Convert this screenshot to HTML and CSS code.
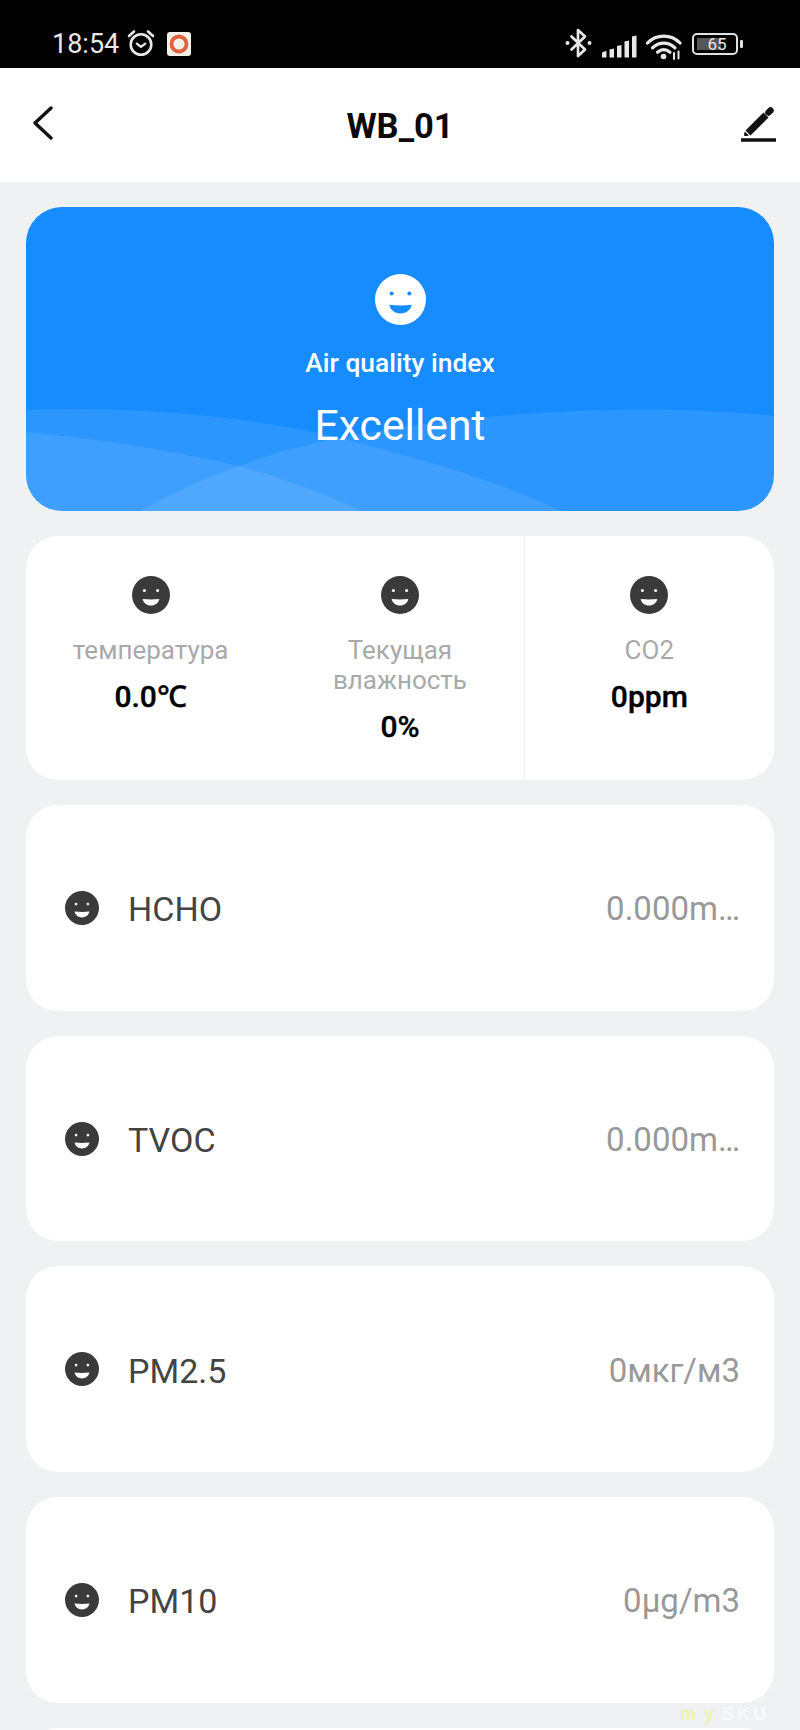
FILE: index.html
```html
<!DOCTYPE html>
<html lang="ru">
<head>
<meta charset="utf-8">
<title>WB_01</title>
<link rel="stylesheet" href="styles.css">
</head>
<body>
<svg class="defs" width="0" height="0" aria-hidden="true">
  <symbol id="face" viewBox="0 0 38 38">
    <circle cx="19" cy="19" r="19" fill="currentColor"/>
    <circle cx="12.400" cy="14.600" r="1.500" fill="var(--face-detail)"/>
    <circle cx="25.600" cy="14.600" r="1.500" fill="var(--face-detail)"/>
    <path d="M10.700 23q8.300 .9 16.600 0c-.7 4-4.100 6.500-8.300 6.500s-7.600-2.500-8.300-6.500z" fill="var(--face-detail)"/>
  </symbol>
</svg>
<div class="status">
  <span class="time">18:54</span>
  <svg class="s-alarm" width="28" height="28" viewBox="0 0 28 28" fill="none" stroke="#e8e8e8" stroke-linecap="round" stroke-linejoin="round">
    <circle cx="14" cy="15.500" r="10.300" stroke-width="2.600"/>
    <path d="M9.800 14.600l4.200 3.300 4.200-3.300" stroke-width="2.300"/>
    <path d="M2 7l5-4.500M26 7l-5-4.500" stroke-width="2.600"/>
  </svg>
  <svg class="s-app" width="24" height="24" viewBox="0 0 24 24">
    <rect width="24" height="24" rx="3" fill="#f4f0ea"/>
    <circle cx="12" cy="12" r="7.500" fill="none" stroke="#e0613d" stroke-width="3.800"/>
  </svg>
  <span class="s-spacer"></span>
  <svg class="s-bt" width="27" height="30" viewBox="0 0 27 30" fill="none" stroke="#e8e8e8" stroke-width="2.700" stroke-linejoin="round" stroke-linecap="round">
    <path d="M6.500 8.500L20 21.500l-7 6.500V2l7 6.500L6.500 21.500"/>
    <circle cx="2.500" cy="15" r="2" fill="#e8e8e8" stroke="none"/>
    <circle cx="24.500" cy="15" r="2" fill="#e8e8e8" stroke="none"/>
  </svg>
  <svg class="s-signal" width="35" height="23" viewBox="0 0 35 23" fill="#e8e8e8">
    <path d="M0 18.500q0-1.500 1.500-1.800L4.500 16v6.500H0zM7.500 14.500l4.500-1v9H7.500zM15 11l4.500-1v12.500H15zM22.500 6.500l4.500-1v17h-4.500zM30 1.500l4.500-1v22H30z"/>
  </svg>
  <svg class="s-wifi" width="36" height="27" viewBox="0 0 36 27" fill="none" stroke="#e8e8e8" stroke-width="3.200" stroke-linecap="round">
    <path d="M1.500 10C10.500 .8 25 .8 34 10"/>
    <path d="M6.500 14.800C13 8.500 22.500 8.500 29 14.800"/>
    <path d="M11.500 19.300c4-3.500 8.500-3.500 12.500 0"/>
    <circle cx="17.500" cy="23.500" r="2.800" fill="#e8e8e8" stroke="none"/>
    <path d="M28 20v6M32.500 18.500v7" stroke-width="2"/>
  </svg>
  <div class="battery">
    <span class="bat-fill"></span>
    <span class="bat-text">65</span>
  </div>
  <span class="bat-nub"></span>
</div>

<header class="nav">
  <svg class="back" width="20" height="34" viewBox="0 0 20 34" fill="none" stroke="#111" stroke-width="3.400" stroke-linecap="round" stroke-linejoin="round">
    <path d="M18 2L2 17l16 15"/>
  </svg>
  <h1 class="title">WB_01</h1>
  <svg class="edit" width="35" height="36" viewBox="0 0 35 36" fill="none" stroke="#111">
    <path d="M7 27L25 9" stroke-width="7"/>
    <path d="M27.500 6.500l2-2" stroke-width="6.500" stroke-linecap="round"/>
    <path d="M3.600 29.500l.3-3.200 3.300 3z" fill="#111" stroke-width="1"/>
    <path d="M0 34h35" stroke-width="3.600"/>
  </svg>
</header>

<main class="content">
  <section class="hero">
    <svg class="waves" viewBox="0 0 748 304" preserveAspectRatio="none" aria-hidden="true">
      <path class="wave" d="M0 203C120 198 250 212 340 238C420 258 490 282 535 304H0z"/>
      <path class="wave" d="M0 225C80 232 150 245 214 259C260 272 305 290 336 304H0z"/>
      <path class="wave" d="M114 304C150 285 180 270 214 259C260 240 340 222 459 210C540 203 640 198 748 209V304z"/>
    </svg>
    <svg class="hero-face"><use href="#face"/></svg>
    <div class="hero-label">Air quality index</div>
    <div class="hero-value">Excellent</div>
  </section>

  <section class="stats">
    <div class="stat">
      <svg class="stat-face"><use href="#face"/></svg>
      <div class="stat-label">температура</div>
      <div class="stat-value">0.0℃</div>
    </div>
    <div class="stat">
      <svg class="stat-face"><use href="#face"/></svg>
      <div class="stat-label">Текущая влажность</div>
      <div class="stat-value">0%</div>
    </div>
    <div class="stat stat-last">
      <svg class="stat-face"><use href="#face"/></svg>
      <div class="stat-label">CO2</div>
      <div class="stat-value">0ppm</div>
    </div>
  </section>

  <section class="row">
    <svg class="row-face"><use href="#face"/></svg>
    <span class="row-name">HCHO</span>
    <span class="row-value">0.000m…</span>
  </section>
  <section class="row">
    <svg class="row-face"><use href="#face"/></svg>
    <span class="row-name">TVOC</span>
    <span class="row-value">0.000m…</span>
  </section>
  <section class="row">
    <svg class="row-face"><use href="#face"/></svg>
    <span class="row-name">PM2.5</span>
    <span class="row-value">0мкг/м3</span>
  </section>
  <section class="row">
    <svg class="row-face"><use href="#face"/></svg>
    <span class="row-name">PM10</span>
    <span class="row-value">0μg/m3</span>
  </section>
  <section class="row"></section>
</main>
<div class="watermark"><span class="wm-my">my</span><span class="wm-sku">SKU</span></div>
</body>
</html>
```
FILE: styles.css
```css
* { box-sizing: border-box; }
html, body {
  margin: 0;
  height: 1730px;
  overflow: hidden;
}
body {
  position: relative;
  background: #eff1f3;
  font-family: Roboto, "Noto Sans", sans-serif;
  --face-detail: #fff;
}
.defs { position: absolute; }

.status {
  height: 68px;
  background: #000;
  display: flex;
  align-items: center;
  padding: 20px 57px 0 52px;
  color: #e8e8e8;
}
.time { font-size: 27px; line-height: 30px; width: 75px; }
.s-alarm { margin-top: -2px; }
.s-app { margin-left: 12px; }
.s-spacer { flex: 1; }
.s-bt { margin-top: -2px; }
.s-signal { margin-left: 10px; margin-top: 5px; }
.s-wifi { margin-left: 9px; margin-top: 4px; }
.battery {
  position: relative;
  width: 46px;
  height: 22px;
  margin-left: 10px;
  border: 2px solid #e0e0e0;
  border-radius: 5px;
  overflow: hidden;
  display: flex;
  align-items: center;
  justify-content: center;
}
.bat-fill {
  position: absolute;
  left: 3px;
  top: 3px;
  bottom: 3px;
  width: 24px;
  background: #555;
}
.bat-text {
  position: relative;
  font-size: 17px;
  line-height: 18px;
  color: #e8e8e8;
  margin-left: 4px;
}
.bat-nub {
  width: 3px;
  height: 8px;
  margin-left: 2px;
  border-radius: 1px;
  background: #e0e0e0;
}

.nav {
  height: 114px;
  background: #fff;
  display: grid;
  grid-template-columns: 1fr auto 1fr;
  align-items: center;
  padding: 0 24px;
}
.back { margin-left: 9px; margin-top: -4px; }
.title {
  margin: 2px 0 0;
  font-size: 34.500px;
  line-height: 40px;
  font-weight: 700;
  color: #0a0a0a;
}
.edit { justify-self: end; margin-top: -2px; }

.content {
  height: 1548px;
  overflow: hidden;
  display: flex;
  flex-direction: column;
  gap: 25px;
  padding: 25px 26px 0;
}

.hero {
  position: relative;
  height: 304px;
  flex: none;
  border-radius: 36px;
  overflow: hidden;
  background: #168cfe;
  color: #fff;
  display: flex;
  flex-direction: column;
  align-items: center;
  padding-top: 67px;
  --face-detail: #168cfe;
}
.waves {
  position: absolute;
  left: 0;
  top: 0;
  width: 100%;
  height: 100%;
}
.wave { fill: #fff; opacity: .09; }
.hero-face { position: relative; width: 51px; height: 51px; color: #fff; }
.hero-label {
  position: relative;
  margin-top: 23px;
  font-size: 26.400px;
  line-height: 30px;
  font-weight: 500;
}
.hero-value {
  position: relative;
  margin-top: 20px;
  font-size: 42.700px;
  line-height: 54px;
}

.stats {
  height: 244px;
  flex: none;
  background: #fff;
  border-radius: 32px;
  display: grid;
  grid-template-columns: repeat(3, 1fr);
}
.stat {
  display: flex;
  flex-direction: column;
  align-items: center;
  padding: 40px 20px 0;
  text-align: center;
}
.stat-last { border-left: 1px solid #f1f1f1; margin-left: -1px; }
.stat-face { width: 38px; height: 38px; color: #3a3a3a; flex: none; }
.stat-label {
  margin-top: 21px;
  font-size: 26px;
  line-height: 30px;
  color: #a9a9a9;
  max-width: 170px;
}
.stat-value {
  margin-top: 15px;
  font-size: 30px;
  line-height: 34px;
  font-weight: 500;
  color: #000;
  -webkit-text-stroke: .4px #000;
}

.row {
  height: 205.700px;
  flex: none;
  background: #fff;
  border-radius: 32px;
  display: flex;
  align-items: center;
  padding: 0 34px 0 39px;
}
.row-face { width: 34px; height: 34px; color: #3a3a3a; flex: none; }
.row-name {
  margin: 3px 0 0 29px;
  font-size: 34px;
  line-height: 40px;
  color: #444;
}
.row-value {
  margin: 3px 0 0 auto;
  font-size: 33px;
  line-height: 40px;
  color: #999;
}

.watermark {
  position: absolute;
  left: 680px;
  top: 1704px;
  font: 700 18px/20px "Liberation Sans", sans-serif;
}
.wm-my { color: #f0f2b0; letter-spacing: 8px; }
.wm-sku { color: #f8f9fa; letter-spacing: 3px; }
```
